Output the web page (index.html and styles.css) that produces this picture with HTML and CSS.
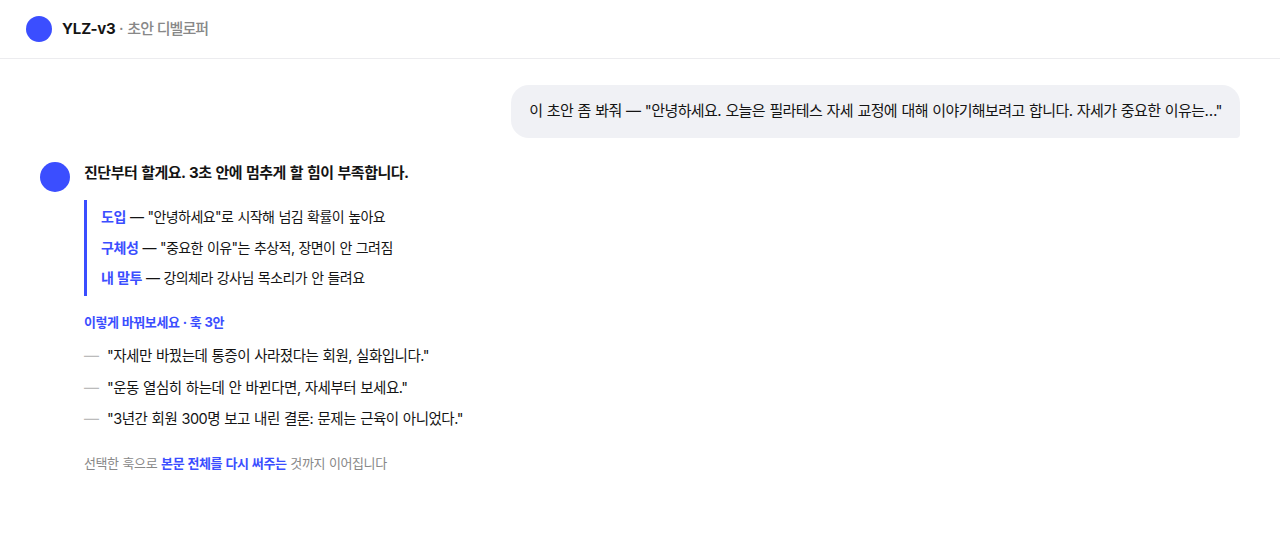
FILE: index.html
```html
<!DOCTYPE html>
<html lang="ko">
<head>
<meta charset="utf-8">
<meta name="viewport" content="width=device-width, initial-scale=1">
<title>YLZ-v3</title>
<link rel="stylesheet" href="styles.css">
</head>
<body>
<header class="top">
<span class="dot"></span>
<h1>YLZ-v3 <span>· <i>초안 디벨로퍼</i></span></h1>
</header>
<main class="chat">
<div class="user">이 초안 좀 봐줘 — "안녕하세요. 오늘은 필라테스 자세 교정에 대해 이야기해보려고 합니다. 자세가 중요한 이유는…"</div>
<div class="bot">
<span class="avatar"></span>
<div class="msg">
<p class="lead">진단부터 할게요. 3초 안에 멈추게 할 힘이 부족합니다.</p>
<div class="diag">
<p><b>도입</b> — "안녕하세요"로 시작해 넘김 확률이 높아요</p>
<p><b>구체성</b> — "중요한 이유"는 추상적, 장면이 안 그려짐</p>
<p><b>내 말투</b> — 강의체라 강사님 목소리가 안 들려요</p>
</div>
<p class="label">이렇게 바꿔보세요 · 훅 3안</p>
<ul class="hooks">
<li>"자세만 바꿨는데 통증이 사라졌다는 회원, 실화입니다."</li>
<li>"운동 열심히 하는데 안 바뀐다면, 자세부터 보세요."</li>
<li>"3년간 회원 300명 보고 내린 결론: 문제는 근육이 아니었다."</li>
</ul>
<p class="next">선택한 훅으로 <b>본문 전체를 다시 써주는</b> 것까지 이어집니다</p>
</div>
</div>
</main>
</body>
</html>
```
FILE: styles.css
```css
*{box-sizing:border-box;margin:0;padding:0;}
body{background:#fff;color:#141414;font-family:Inter,"Noto Sans CJK KR",sans-serif;font-size:15px;letter-spacing:-0.01em;}
.top{display:flex;align-items:center;gap:10px;height:59px;padding:0 26px;border-bottom:1px solid #ececef;}
.dot{width:26px;height:26px;border-radius:50%;background:#3b4eff;}
h1{font-size:15px;font-weight:700;line-height:22px;}
h1 span{color:#888;font-weight:500;}
h1 i{font-style:normal;letter-spacing:-0.95px;word-spacing:0.7px;}
.chat{display:flex;flex-direction:column;gap:24px;padding:26px 40px;}
.user{align-self:flex-end;padding:13px 18px 15px;line-height:25px;letter-spacing:-0.6px;word-spacing:0.8px;background:#f0f1f5;border-radius:18px 18px 4px 18px;}
.bot{display:flex;gap:14px;}
.avatar{flex:none;width:30px;height:30px;border-radius:50%;background:#3b4eff;}
.lead{font-weight:700;line-height:22px;letter-spacing:-0.48px;word-spacing:0.8px;margin-bottom:16px;}
.diag{border-left:3px solid #3b4eff;padding:2px 0 2px 14px;font-size:14px;line-height:30.6px;letter-spacing:-0.54px;word-spacing:0.6px;}
b{color:#3b4eff;font-weight:700;}
.diag b{letter-spacing:-0.4px;}
.label{margin-top:15px;font-size:13px;line-height:22px;font-weight:700;letter-spacing:-0.42px;word-spacing:0.5px;color:#3b4eff;}
.hooks{list-style:none;margin-top:7.4px;font-size:14.5px;line-height:31.4px;letter-spacing:-0.5px;word-spacing:0.6px;}
.hooks li::before{content:"—";color:#bbb;font-size:15px;margin-right:8.5px;}
.next{margin-top:17.4px;font-size:13px;line-height:22px;letter-spacing:-0.4px;word-spacing:0.6px;color:#888;}
```
